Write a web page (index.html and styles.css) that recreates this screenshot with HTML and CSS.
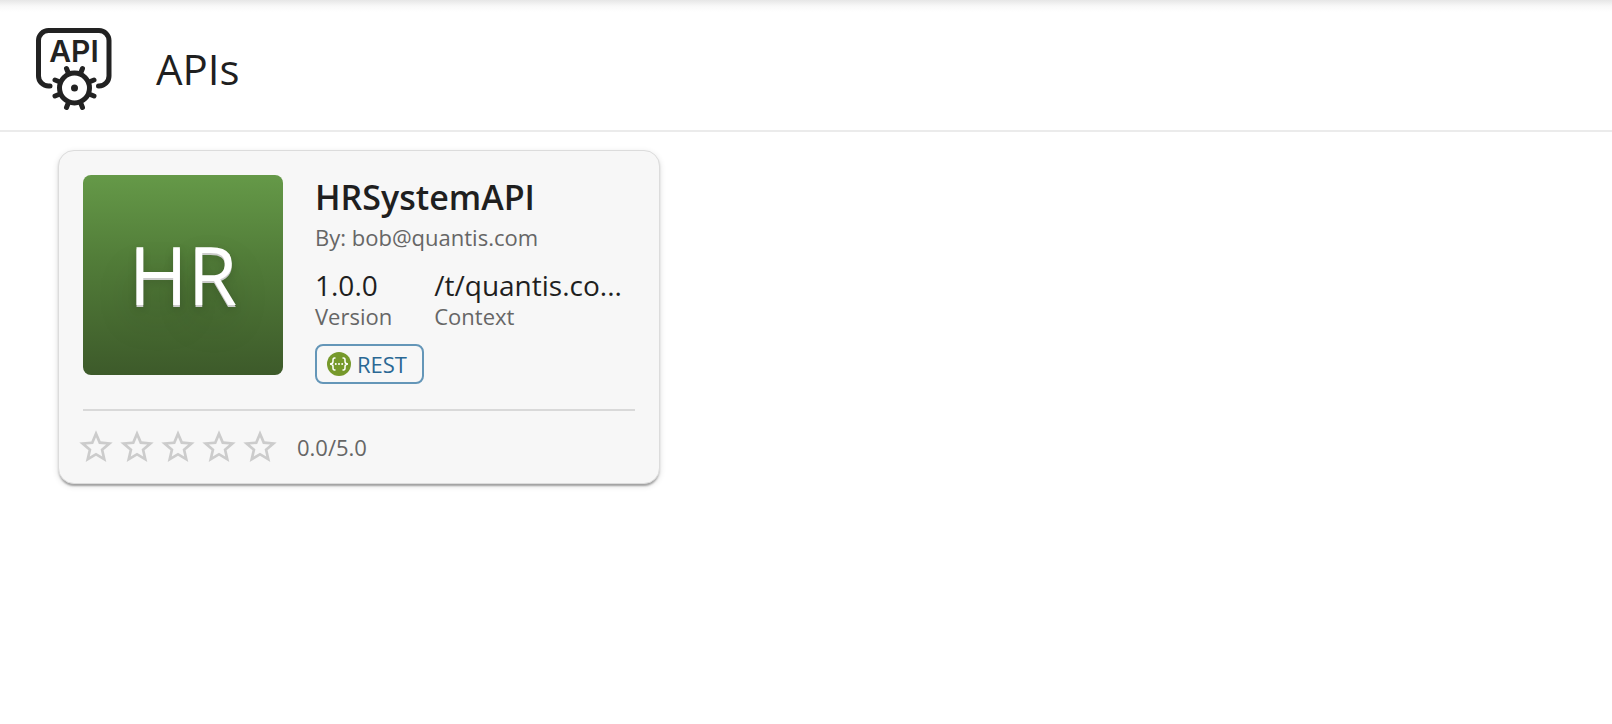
FILE: index.html
```html
<!DOCTYPE html>
<html lang="en">
<head>
<meta charset="utf-8">
<title>APIs</title>
<link rel="stylesheet" href="styles.css">
</head>
<body>
<header class="page-header">
  <svg class="page-icon" viewBox="0 0 80 84" aria-hidden="true">
    <path class="icon-line frame" d="M16 60H14.500A10 10 0 0 1 4.500 50V14.500A10 10 0 0 1 14.500 4.500H65A10 10 0 0 1 75 14.500V50A10 10 0 0 1 65 60H64.500"/>
    <text class="icon-text" x="40" y="36">API</text>
    <circle class="icon-line" cx="40.500" cy="62" r="15"/>
    <path class="icon-line" d="M46.500 47.500l2-5M55 56l5-2M55 68l5 2M46.500 76.500l2 5M34.500 76.500l-2 5M26 68l-5 2M26 56l-5-2M34.500 47.500l-2-5"/>
    <circle class="icon-dot" cx="40.500" cy="62" r="3.500"/>
  </svg>
  <h1 class="page-title">APIs</h1>
</header>
<main class="content">
  <article class="card">
    <div class="card-body">
      <div class="thumb">HR</div>
      <div class="details">
        <h2 class="name">HRSystemAPI</h2>
        <p class="caption">By: bob@quantis.com</p>
        <div class="meta">
          <div class="version">
            <p class="value">1.0.0</p>
            <p class="caption">Version</p>
          </div>
          <div class="context">
            <p class="value">/t/quantis.co...</p>
            <p class="caption">Context</p>
          </div>
        </div>
        <span class="chip">
          <svg class="chip-icon" viewBox="0 0 24 24" aria-hidden="true">
            <circle class="chip-disc" cx="12" cy="12" r="12"/>
            <path class="chip-brace" d="M8.500 6H7.500Q6 6 6 8V9.500Q6 12 3 12Q6 12 6 14.500V16Q6 18 7.500 18H8.500M15.500 6H16.500Q18 6 18 8V9.500Q18 12 21 12Q18 12 18 14.500V16Q18 18 16.500 18H15.500"/>
            <path class="chip-dots" d="M8.800 12h0M12 12h0M15.200 12h0"/>
          </svg>
          REST
        </span>
      </div>
    </div>
    <div class="rating">
      <svg class="defs" aria-hidden="true"><symbol id="star" viewBox="0 0 24 24"><path d="M22 9.240l-7.190-.620L12 2 9.190 8.630 2 9.240l5.460 4.730L5.820 21 12 17.270 18.180 21l-1.630-7.030L22 9.240zM12 15.400l-3.760 2.270 1-4.280-3.320-2.880 4.380-.380L12 6.100l1.710 4.040 4.380.380-3.320 2.880 1 4.280L12 15.400z"/></symbol></svg>
      <div class="stars" role="img" aria-label="0 out of 5 stars">
        <svg class="star"><use href="#star"/></svg>
        <svg class="star"><use href="#star"/></svg>
        <svg class="star"><use href="#star"/></svg>
        <svg class="star"><use href="#star"/></svg>
        <svg class="star"><use href="#star"/></svg>
      </div>
      <span class="caption">0.0/5.0</span>
    </div>
  </article>
</main>
</body>
</html>
```
FILE: styles.css
```css
* { box-sizing: border-box; }

body {
  margin: 0;
  background: #fff;
  color: #1f1f1f;
  font-family: "Open Sans", sans-serif;
}

h1, h2, p { margin: 0; font-weight: 400; }

.page-header {
  display: flex;
  align-items: center;
  gap: 42px;
  padding: 26px 34px 20px;
  border-bottom: 2px solid #ebebeb;
  background: linear-gradient(#e6e6e6, #f8f8f8 6px, #fff 12px);
}

.page-icon { width: 80px; height: 84px; }
.icon-line { fill: none; stroke: #222; stroke-width: 5; stroke-linecap: round; }
.icon-text { font: 600 30px Inter, sans-serif; fill: #222; text-anchor: middle; }
.icon-dot { fill: #222; }

.page-title { padding-top: 2px; font-size: 42px; line-height: 56px; }

.content { padding: 18px 58px; }

.card {
  max-width: 602px;
  padding: 24px 24px 16px;
  border: 1px solid #dcdcdc;
  border-radius: 16px;
  background: #f7f7f7;
  box-shadow: 0 4px 2px -2px rgba(0, 0, 0, .2), 0 2px 2px rgba(0, 0, 0, .14), 0 2px 6px rgba(0, 0, 0, .12);
}

.card-body { display: flex; gap: 32px; }

.thumb {
  display: flex;
  flex: none;
  align-items: center;
  justify-content: center;
  width: 200px;
  height: 200px;
  padding-bottom: 4px;
  border-radius: 8px;
  background: linear-gradient(#659948, #527d39 42%, #3d5a2a);
  color: #fff;
  font-size: 80px;
  text-shadow: 0 2px 0 #ccc, 0 4px 8px rgba(0, 0, 0, .15), 0 20px 40px rgba(0, 0, 0, .2);
}

.details { flex: 1; min-width: 0; }
.name { font-size: 34px; font-weight: 600; line-height: 44px; }
.caption { color: #666; font-size: 22px; line-height: 36px; }
.value { font-size: 28px; line-height: 32px; white-space: nowrap; }
.meta { display: flex; gap: 42px; padding: 14px 0 13px; }
.meta .caption { line-height: 30px; }

.chip {
  display: flex;
  align-items: center;
  gap: 6px;
  width: fit-content;
  padding: 0 15px 0 10px;
  border: 2px solid #6496b8;
  border-radius: 8px;
  color: #2a6894;
  font-size: 22px;
  line-height: 36px;
}

.chip-icon { width: 24px; height: 24px; }
.chip-disc { fill: #76992b; }
.chip-brace { fill: none; stroke: #fff; stroke-width: 1.5; }
.chip-dots { stroke: #fff; stroke-width: 2; stroke-linecap: round; }

.rating {
  display: flex;
  align-items: center;
  gap: 17px;
  margin-top: 25px;
  padding-top: 16px;
  border-top: 2px solid #d9d9d9;
}

.defs { display: none; }
.stars { display: flex; gap: 1px; margin-left: -7px; }
.star { width: 40px; height: 40px; fill: #ccc; }
```
